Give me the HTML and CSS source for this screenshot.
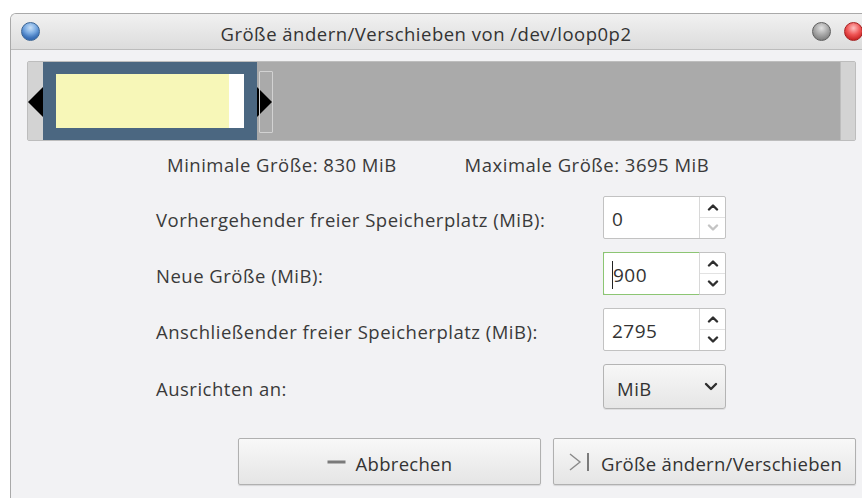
FILE: index.html
```html
<!DOCTYPE html>
<html lang="de">
<head>
<meta charset="utf-8">
<title>Größe ändern/Verschieben</title>
<link rel="stylesheet" href="styles.css">
</head>
<body>
<div class="window">
  <div class="titlebar">
    <span class="tb-btn tb-menu"></span>
    <div class="title">Größe ändern/Verschieben von /dev/loop0p2</div>
    <span class="tb-btn tb-min"></span>
    <span class="tb-btn tb-close"></span>
  </div>
  <div class="content">
    <div class="partmap">
      <div class="seg seg-before"></div>
      <div class="seg seg-part"><div class="fill-used"></div><div class="fill-free"></div></div>
      <div class="seg seg-unalloc"></div>
      <div class="seg seg-end"></div>
      <span class="handle handle-left"></span>
      <span class="handle handle-right"></span>
      <span class="ghost"></span>
    </div>

    <div class="limits">
      <span class="limit-min">Minimale Größe: 830 MiB</span>
      <span class="limit-max">Maximale Größe: 3695 MiB</span>
    </div>

    <div class="form">
      <label class="field-label">Vorhergehender freier Speicherplatz (MiB):</label>
      <div class="spin">
        <div class="spin-entry">0</div>
        <div class="spin-arrows">
          <span class="spin-btn"><svg width="12" height="8" viewBox="0 0 12 8"><polyline points="2,6.5 6,2.5 10,6.5" class="chev"/></svg></span>
          <span class="spin-btn"><svg width="12" height="8" viewBox="0 0 12 8"><polyline points="2,1.5 6,5.5 10,1.5" class="chev chev-off"/></svg></span>
        </div>
      </div>

      <label class="field-label">Neue Größe (MiB):</label>
      <div class="spin spin-focus">
        <div class="spin-entry"><span class="caret"></span>900</div>
        <div class="spin-arrows">
          <span class="spin-btn"><svg width="12" height="8" viewBox="0 0 12 8"><polyline points="2,6.5 6,2.5 10,6.5" class="chev"/></svg></span>
          <span class="spin-btn"><svg width="12" height="8" viewBox="0 0 12 8"><polyline points="2,1.5 6,5.5 10,1.5" class="chev"/></svg></span>
        </div>
      </div>

      <label class="field-label">Anschließender freier Speicherplatz (MiB):</label>
      <div class="spin">
        <div class="spin-entry">2795</div>
        <div class="spin-arrows">
          <span class="spin-btn"><svg width="12" height="8" viewBox="0 0 12 8"><polyline points="2,6.5 6,2.5 10,6.5" class="chev"/></svg></span>
          <span class="spin-btn"><svg width="12" height="8" viewBox="0 0 12 8"><polyline points="2,1.5 6,5.5 10,1.5" class="chev"/></svg></span>
        </div>
      </div>

      <label class="field-label">Ausrichten an:</label>
      <div class="combo">
        <span class="combo-text">MiB</span>
        <svg width="14" height="9" viewBox="0 0 14 9"><polyline points="2,2 7,7 12,2" class="chev"/></svg>
      </div>
    </div>

    <div class="actions">
      <button class="btn">
        <svg width="19" height="6" viewBox="0 0 19 6"><rect x="0.5" y="1.5" width="18" height="3" fill="#7a7a7a"/></svg>
        <span>Abbrechen</span>
      </button>
      <button class="btn">
        <svg width="24" height="24" viewBox="0 0 24 24"><polyline points="3,4 13,12 3,20" fill="none" stroke="#8a8a8a" stroke-width="1.4"/><line x1="21" y1="3" x2="21" y2="21" stroke="#555" stroke-width="1.5"/></svg>
        <span>Größe ändern/Verschieben</span>
      </button>
    </div>
  </div>
</div>
</body>
</html>
```

FILE: styles.css
```css
html, body {
  margin: 0;
  padding: 0;
  background: #ffffff;
  overflow: hidden;
  width: 862px;
  height: 498px;
}

body {
  font-family: "Open Sans", "Noto Sans", sans-serif;
  font-size: 18.5px;
  letter-spacing: 0.5px;
  color: #3a3a3a;
}

.window {
  margin: 13px 0 0 10px;
  width: 860px;
  height: 500px;
  border: 1px solid #a9a9a9;
  border-right: none;
  border-radius: 6px 0 0 0;
  background: #f2f2f4;
  overflow: hidden;
}

/* title bar */
.titlebar {
  height: 35px;
  display: flex;
  align-items: center;
  background: linear-gradient(#f1f1f1, #dcdcdc);
  border-bottom: 1px solid #bcbcbc;
  padding: 0 0 0 10px;
}

.title {
  flex: 1;
  text-align: center;
  padding: 4px 0 0 0;
  line-height: 24px;
  color: #333;
}

.tb-btn {
  width: 19px;
  height: 19px;
  border-radius: 50%;
  box-sizing: border-box;
  flex: none;
}

.tb-menu {
  border: 1px solid #3a6494;
  background: radial-gradient(circle at 50% 28%, #c7def5 0, #7eaee4 38%, #3d77c2 80%);
  box-shadow: inset 0 -5px 4px -2px rgba(40, 90, 160, 0.55);
}

.tb-min {
  border: 1px solid #5f5f5f;
  background: radial-gradient(circle at 50% 30%, #e2e2e2 0, #a9a9a9 45%, #7a7a7a 85%);
  margin-right: 13px;
}

.tb-close {
  border: 1px solid #a42020;
  background: radial-gradient(circle at 50% 30%, #ffc0c0 0, #ef5656 45%, #c41d1d 85%);
  margin-right: 8px;
}

/* content */
.content {
  padding: 11px 0 0 16px;
}

/* partition map */
.partmap {
  position: relative;
  width: 827px;
  height: 78px;
  border: 1px solid #bdbdbd;
  border-radius: 2px;
  display: flex;
}

.seg { height: 100%; }

.seg-before {
  width: 15px;
  background: #d3d3d3;
}

.seg-part {
  width: 214px;
  box-sizing: border-box;
  border: 12px solid #4b6781;
  border-left-width: 13px;
  border-right-width: 13px;
  display: flex;
}

.fill-used {
  width: 173px;
  background: #f7f7b8;
}

.fill-free {
  flex: 1;
  background: #ffffff;
}

.seg-unalloc {
  width: 583px;
  background: #aaaaaa;
}

.seg-end {
  flex: 1;
  background: #d3d3d3;
  border-left: 1px solid #bdbdbd;
}

.handle {
  position: absolute;
  top: 25px;
  width: 0;
  height: 0;
  border-top: 15px solid transparent;
  border-bottom: 15px solid transparent;
}

.handle-left {
  left: 0;
  border-right: 15px solid #000;
}

.handle-right {
  left: 229px;
  border-left: 15px solid #000;
}

.ghost {
  position: absolute;
  left: 231px;
  top: 9px;
  width: 12px;
  height: 60px;
  border: 1px solid #d2d2d2;
  border-radius: 1px;
}

/* min / max */
.limits {
  display: flex;
  padding: 11px 0 0 140px;
  height: 42px;
  box-sizing: border-box;
  line-height: 26px;
}

.limit-max {
  margin-left: 68px;
}

/* form */
.form {
  display: grid;
  grid-template-columns: 447px 123px;
  row-gap: 13px;
  margin: 13px 0 0 129px;
  align-items: center;
}

.field-label {
  padding-top: 5px;
  line-height: 26px;
}

.spin {
  height: 43px;
  box-sizing: border-box;
  display: flex;
  background: #fff;
  border: 1px solid #c2c2c2;
  border-radius: 2px;
}

.spin-entry {
  flex: 1;
  display: flex;
  align-items: center;
  padding-left: 8px;
  font-size: 19px;
  letter-spacing: 0.5px;
  color: #333;
  padding-top: 2px;
}

.spin-arrows {
  width: 25px;
  border-left: 1px solid #d8d8d8;
  display: flex;
  flex-direction: column;
}

.spin-btn {
  flex: 1;
  display: flex;
  align-items: center;
  justify-content: center;
}

.spin-btn + .spin-btn {
  border-top: 1px solid #e2e2e2;
}

.chev {
  fill: none;
  stroke: #2e2e2e;
  stroke-width: 2.4;
  stroke-linecap: round;
  stroke-linejoin: round;
}

.chev-off {
  stroke: #c4c4c4;
}

.spin-focus .spin-entry {
  margin: -1px 0 -1px -1px;
  border: 1px solid #8cc573;
  border-right: none;
  padding-left: 8px;
}

.caret {
  display: inline-block;
  width: 1px;
  height: 28px;
  background: #222;
}

.combo {
  height: 45px;
  box-sizing: border-box;
  border: 1px solid #b4b4b4;
  border-radius: 3px;
  background: linear-gradient(#f7f7f7, #e6e6e6);
  box-shadow: 0 1px 0 rgba(0, 0, 0, 0.08);
  display: flex;
  align-items: center;
  justify-content: space-between;
  padding: 0 7px 0 13px;
}

.combo-text {
  padding-top: 4px;
  color: #333;
}

/* buttons */
.actions {
  display: flex;
  gap: 12px;
  margin: 29px 0 0 211px;
}

.btn {
  width: 303px;
  height: 47px;
  box-sizing: border-box;
  border: 1px solid #b0b0b0;
  border-radius: 2px;
  background: linear-gradient(#f8f8f8, #e5e5e5);
  box-shadow: 0 1px 1px rgba(0, 0, 0, 0.12);
  font: inherit;
  letter-spacing: 0.3px;
  color: #333;
  display: flex;
  align-items: center;
  justify-content: center;
  gap: 10px;
  padding: 3px 0 0 0;
}

.btn svg { margin-top: -3px; }
```
